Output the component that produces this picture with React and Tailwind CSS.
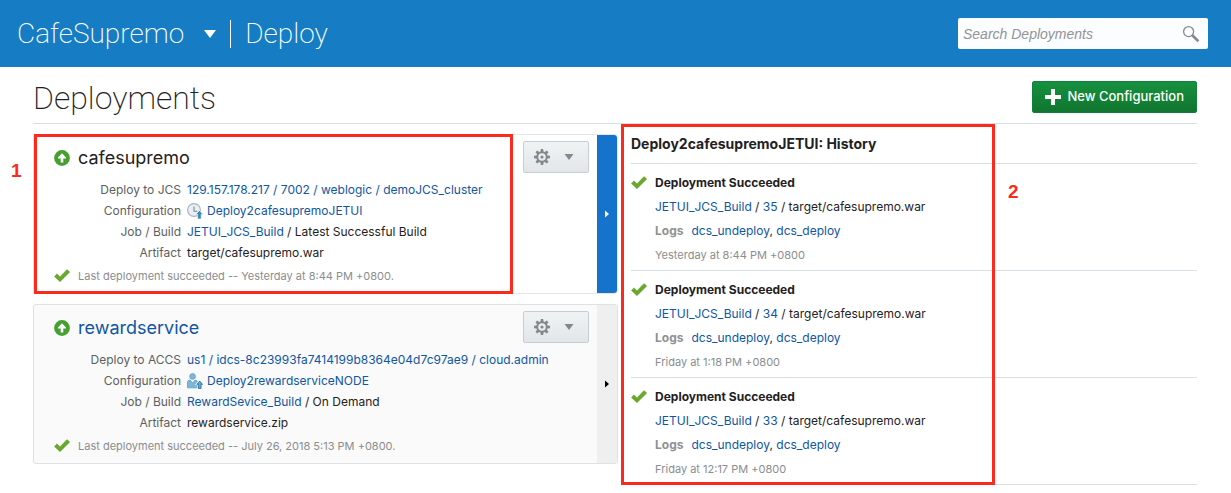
const deployments = [
  {
    name: "cafesupremo",
    selected: true,
    target: "Deploy to JCS",
    targetPath: "129.157.178.217 / 7002 / weblogic / demoJCS_cluster",
    configuration: "Deploy2cafesupremoJETUI",
    icon: "clock",
    job: "JETUI_JCS_Build",
    build: "Latest Successful Build",
    artifact: "target/cafesupremo.war",
    status: "Last deployment succeeded -- Yesterday at 8:44 PM +0800.",
  },
  {
    name: "rewardservice",
    selected: false,
    target: "Deploy to ACCS",
    targetPath: "us1 / idcs-8c23993fa7414199b8364e04d7c97ae9 / cloud.admin",
    configuration: "Deploy2rewardserviceNODE",
    icon: "user",
    job: "RewardSevice_Build",
    build: "On Demand",
    artifact: "rewardservice.zip",
    status: "Last deployment succeeded -- July 26, 2018 5:13 PM +0800.",
  },
];

const history = [
  { build: "35", time: "Yesterday at 8:44 PM +0800" },
  { build: "34", time: "Friday at 1:18 PM +0800" },
  { build: "33", time: "Friday at 12:17 PM +0800" },
];

function CheckIcon() {
  return (
    <svg viewBox="0 0 16 16" className="size-4 shrink-0" aria-hidden="true">
      <path d="M0.4 8.4 3 5.8l3 3L13 1.6l2.8 2.4L6 13.8Z" fill="#69a82c" stroke="#5b9a22" strokeWidth="0.4" />
    </svg>
  );
}

function RunningIcon() {
  return (
    <svg viewBox="0 0 16 16" className="size-4 shrink-0" aria-hidden="true">
      <circle cx="8" cy="8" r="7.9" fill="#46a02f" />
      <path d="M8 3.2 12 7.6v1H9.3V12.4H6.7V8.6H4v-1Z" fill="#fff" />
    </svg>
  );
}

function ClockIcon() {
  return (
    <svg viewBox="0 0 16 16" className="size-4 shrink-0" aria-hidden="true">
      <circle cx="7" cy="7" r="6.4" fill="#e9eff5" stroke="#a9b2bb" strokeWidth="1.1" />
      <path d="M7 3.6V8.2H10.4" fill="none" stroke="#7f8993" strokeWidth="1.1" />
      <path d="M12.4 7.4 16 11.4H14.2V16H10.6V11.4H8.8Z" fill="#3f86b8" stroke="#fff" strokeWidth="0.6" />
    </svg>
  );
}

function UserIcon() {
  return (
    <svg viewBox="0 0 16 16" className="size-4 shrink-0" aria-hidden="true">
      <circle cx="5.6" cy="3.4" r="2.9" fill="#7db5dc" stroke="#5c9cc9" strokeWidth="0.7" />
      <path d="M0.5 14.8V9.2Q0.5 7.2 3 7l2.6 3L8.2 7q2.4.2 2.4 2.2v5.6Z" fill="#7db5dc" stroke="#5c9cc9" strokeWidth="0.8" />
      <path d="M12.7 7.4 15.8 11.2H14.3V15.7H11.1V11.2H9.6Z" fill="#5a9dcb" stroke="#fff" strokeWidth="1.6" paintOrder="stroke" />
      <path d="M12.7 8.2 15.5 11.4H14V15.4H11.4V11.4H9.9Z" fill="#67a8d3" stroke="#2f77a8" strokeWidth="0.8" />
    </svg>
  );
}

function GearIcon() {
  const teeth = [0, 45, 90, 135, 180, 225, 270, 315];
  return (
    <svg viewBox="0 0 16 16" className="size-4" aria-hidden="true">
      <circle cx="8" cy="8" r="4.8" fill="none" stroke="#83888c" strokeWidth="2" />
      <circle cx="8" cy="8" r="1.6" fill="#83888c" />
      {teeth.map((angle) => (
        <path key={angle} d="M6.8 0H9.2L9.6 3H6.4Z" fill="#83888c" transform={`rotate(${angle} 8 8)`} />
      ))}
    </svg>
  );
}

function Link({ children }) {
  return (
    <a href="#" className="text-[#0f56a3] hover:underline">
      {children}
    </a>
  );
}

function Mark({ className, children }) {
  return (
    <span className={"pointer-events-none absolute font-['Liberation_Sans',sans-serif] text-[19px] leading-5 font-bold text-[#fc2a1c] " + className}>
      {children}
    </span>
  );
}

function DeploymentCard({ item }) {
  return (
    <article
      className={
        "relative flex rounded-[3px] border " +
        (item.selected ? "border-[#e3e5e7] bg-white" : "border-[#dfe1e3] bg-[#fafafa]")
      }
    >
      <div className="min-w-0 flex-1 pt-[6px] pr-2 pb-[7px] pl-5">
        <header className="flex h-8 items-center gap-2">
          <span className="flex flex-1 items-center gap-2 pt-[2px]">
            <RunningIcon />
            <h2 className="text-[18px] leading-7">
              {item.selected ? item.name : <Link>{item.name}</Link>}
            </h2>
          </span>
          <button
            type="button"
            aria-label={"Actions for " + item.name}
            className="flex h-8 w-[66px] items-center gap-[14px] rounded-[2px] border border-[#c4ced7] bg-linear-to-b from-[#f0f3f4] to-[#e2e6e8] pl-[10px]"
          >
            <GearIcon />
            <svg viewBox="0 0 10 6" className="h-[6px] w-[10px]" aria-hidden="true">
              <path d="M0.5 0H9.5L5 6Z" fill="#83888c" />
            </svg>
          </button>
        </header>
        <dl className="mt-[6px] grid grid-cols-[127px_minmax(0,1fr)] gap-x-[6px] leading-[21px] [&>dt]:text-right [&>dt]:text-[#5c5f62]">
          <dt>{item.target}</dt>
          <dd className="whitespace-nowrap">
            <Link>{item.targetPath}</Link>
          </dd>
          <dt>Configuration</dt>
          <dd className="flex items-center gap-1">
            {item.icon === "clock" ? <ClockIcon /> : <UserIcon />}
            <Link>{item.configuration}</Link>
          </dd>
          <dt>Job / Build</dt>
          <dd>
            <Link>{item.job}</Link> / {item.build}
          </dd>
          <dt>Artifact</dt>
          <dd>{item.artifact}</dd>
        </dl>
        <p className="mt-[3px] flex items-center gap-2 text-[11px] leading-5 text-[#8b8d8f]">
          <CheckIcon />
          {item.status}
        </p>
      </div>
      <button
        type="button"
        aria-label={"Show history of " + item.name}
        className={
          "flex w-5 items-center justify-center rounded-r-[3px] " +
          (item.selected ? "bg-[#1673cb] text-white" : "bg-[#efefef] text-black")
        }
      >
        <svg viewBox="0 0 4 8" className="h-2 w-1" aria-hidden="true">
          <path d="M0 0.5 4 4 0 7.5Z" fill="currentColor" />
        </svg>
      </button>
      {item.selected && (
        <>
          <div className="pointer-events-none absolute -top-px left-0 h-[160px] w-[479px] border-[3px] border-[#fc2a1c]" />
          <Mark className="top-[26px] -left-[23px]">1</Mark>
        </>
      )}
    </article>
  );
}

export default function App() {
  return (
    <div className="bg-white font-['Inter','Liberation_Sans',sans-serif] text-xs text-[#1f2122]">
      <header className="flex h-[67px] items-center justify-between bg-[#167dc4] pr-[23px] pl-[17px] text-white">
        <div className="flex items-center font-['Roboto','Liberation_Sans',sans-serif] text-[28px] leading-10 font-extralight">
          <span>CafeSupremo</span>
          <button type="button" aria-label="Switch project" className="ml-5 flex h-8 w-3 items-center">
            <svg viewBox="0 0 12 8" className="h-2 w-3" aria-hidden="true">
              <path d="M0 0H12L6 8Z" fill="#fff" />
            </svg>
          </button>
          <span className="mr-[14px] ml-[14px] h-7 w-px bg-white" />
          <span>Deploy</span>
        </div>
        <label className="flex h-[31px] w-[250px] items-center rounded-[2px] bg-[#fcfdfe] pr-2 pl-[5px]">
          <input
            type="text"
            aria-label="Search Deployments"
            placeholder="Search Deployments"
            className="min-w-0 flex-1 bg-transparent font-['Liberation_Sans',sans-serif] text-sm text-[#333] italic outline-none placeholder:text-[#919497]"
          />
          <svg viewBox="0 0 18 18" className="size-[18px]" fill="none" aria-hidden="true">
            <circle cx="6.6" cy="6.6" r="5" stroke="#85898c" strokeWidth="1.3" />
            <path d="M10.3 10.3 16.4 16.2" stroke="#85898c" strokeWidth="2.6" />
          </svg>
        </label>
      </header>

      <main className="pr-[34px] pl-[33px]">
        <div className="flex h-[57px] items-center justify-between border-b border-[#d6dfe6]">
          <h1 className="pt-[6px] font-['Roboto','Liberation_Sans',sans-serif] text-[32px] leading-10 font-extralight">Deployments</h1>
          <button
            type="button"
            className="mt-1 flex h-8 items-center gap-[6px] rounded-[2px] border border-[#12803a] bg-linear-to-b from-[#16913f] to-[#11752f] px-3 text-[13px] font-medium text-white"
          >
            <svg viewBox="0 0 16 16" className="size-4" aria-hidden="true">
              <path d="M6 0H10V6H16V10H10V16H6V10H0V6H6Z" fill="#fff" />
            </svg>
            New Configuration
          </button>
        </div>

        <div className="grid grid-cols-[585fr_566fr] gap-[13px]">
          <div className="flex flex-col gap-[10px] pt-[10px]">
            {deployments.map((item) => (
              <DeploymentCard key={item.name} item={item} />
            ))}
          </div>

          <section className="relative">
            <h2 className="border-b border-[#d6dfe6] text-[14px] leading-[39px] font-bold">
              Deploy2cafesupremoJETUI: History
            </h2>
            <ul>
              {history.map((entry) => (
                <li key={entry.build} className="flex gap-2 border-b border-[#d6dfe6] pt-[7px] pb-[3px] leading-6">
                  <span className="flex h-6 items-center">
                    <CheckIcon />
                  </span>
                  <div>
                    <h3 className="font-bold">Deployment Succeeded</h3>
                    <p>
                      <Link>JETUI_JCS_Build</Link> / <Link>{entry.build}</Link> / target/cafesupremo.war
                    </p>
                    <p>
                      <span className="mr-2 font-bold text-[#8f9193]">Logs</span>
                      <Link>dcs_undeploy</Link>, <Link>dcs_deploy</Link>
                    </p>
                    <p className="text-[11px] leading-6 text-[#8b8d8f]">{entry.time}</p>
                  </div>
                </li>
              ))}
            </ul>
            <div className="pointer-events-none absolute top-0 -left-[10px] h-[361px] w-[374px] border-[3px] border-[#fc2a1c]" />
            <Mark className="top-[58px] left-[377px]">2</Mark>
          </section>
        </div>
      </main>
    </div>
  );
}
